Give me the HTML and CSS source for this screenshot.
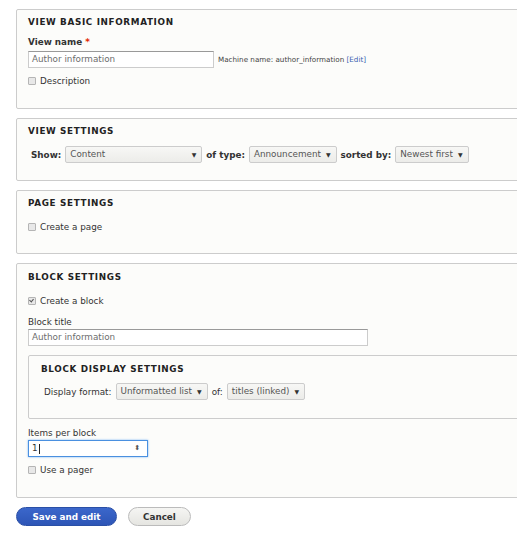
FILE: index.html
```html
<!DOCTYPE html>
<html lang="en">
<head>
    <meta charset="UTF-8">
    <title>Add view</title>
    <link rel="stylesheet" href="styles.css">
</head>
<body>
    <form class="views-form">
        <!-- Basic information -->
        <div class="fieldset basic">
            <div class="legend">View basic information</div>
            <div class="field-label">View name <span class="required">*</span></div>
            <div class="name-row">
                <div class="text-input name-input">Author information</div>
                <span class="machine-name">Machine name: author_information <a href="#">[Edit]</a></span>
            </div>
            <div class="checkbox-row"><span class="checkbox"></span>Description</div>
        </div>

        <!-- Wizard: what to show -->
        <div class="fieldset view-settings">
            <div class="legend">View settings</div>
            <div class="inline-row">
                <span class="inline-label">Show:</span>
                <span class="select select-show">Content</span>
                <span class="inline-label">of type:</span>
                <span class="select">Announcement</span>
                <span class="inline-label">sorted by:</span>
                <span class="select">Newest first</span>
            </div>
        </div>

        <div class="fieldset page-settings">
            <div class="legend">Page settings</div>
            <div class="checkbox-row"><span class="checkbox"></span>Create a page</div>
        </div>

        <div class="fieldset block-settings">
            <div class="legend">Block settings</div>
            <div class="checkbox-row"><span class="checkbox checked"></span>Create a block</div>
            <div class="plain-label">Block title</div>
            <div class="text-input block-title">Author information</div>

            <div class="fieldset inner">
                <div class="legend">Block display settings</div>
                <div class="inline-row plain">
                    <span class="inline-label">Display format:</span>
                    <span class="select">Unformatted list</span>
                    <span class="inline-label">of:</span>
                    <span class="select">titles (linked)</span>
                </div>
            </div>

            <div class="plain-label">Items per block</div>
            <div class="text-input number-input"><span>1</span><span class="caret"></span><span class="spinner">&#11021;</span></div>
            <div class="checkbox-row pager"><span class="checkbox"></span>Use a pager</div>
        </div>

        <div class="actions">
            <button type="button" class="button primary">Save and edit</button>
            <button type="button" class="button">Cancel</button>
        </div>
    </form>
</body>
</html>
```

FILE: styles.css
```css
html {
    overflow: hidden;
}
body {
    margin: 0;
    background: #fff;
    font-family: "DejaVu Sans", Verdana, sans-serif;
    font-size: 8.8px;
    color: #333;
}
.views-form {
    padding: 9px 0 0 16px;
    width: 540px;
}
.fieldset {
    border: 1px solid #ccc;
    border-radius: 2px;
    background: #fcfcfa;
    padding: 5px 11px 20px;
    margin-bottom: 9px;
}
.legend {
    font-weight: bold;
    text-transform: uppercase;
    letter-spacing: 0.65px;
    line-height: 14px;
    color: #222;
}
.field-label {
    font-weight: bold;
    line-height: 14px;
    margin-top: 6px;
}
.required {
    color: #e32700;
}
.name-row {
    display: flex;
    align-items: center;
    gap: 4px;
    margin-top: 2px;
}
.text-input {
    box-sizing: border-box;
    height: 17px;
    border: 1px solid #ccc;
    border-top-color: #999;
    background: #fff;
    color: #6d6d6d;
    padding: 0 3px;
    line-height: 15px;
}
.name-input {
    width: 186px;
}
.machine-name {
    font-size: 7.2px;
    color: #444;
}
.machine-name a {
    color: #3b5fb0;
    text-decoration: none;
}
.checkbox-row {
    display: flex;
    align-items: center;
    line-height: 14px;
    margin-top: 6px;
}
.checkbox {
    box-sizing: border-box;
    width: 8px;
    height: 8px;
    border: 1px solid #b5b5b5;
    border-radius: 1px;
    background: #e8e8e8;
    margin-right: 4px;
    position: relative;
}
.checkbox.checked::after {
    content: "";
    position: absolute;
    left: 1px;
    top: 0;
    width: 2px;
    height: 3px;
    border: solid #555;
    border-width: 0 1.5px 1.5px 0;
    transform: rotate(40deg);
}
.inline-row {
    display: flex;
    align-items: center;
    gap: 4px;
    margin-top: 8px;
    padding-left: 3px;
}
.inline-label {
    font-weight: bold;
}
.inline-row.plain .inline-label {
    font-weight: normal;
}
.select {
    box-sizing: border-box;
    height: 17px;
    line-height: 15px;
    border: 1px solid #ccc;
    border-radius: 2px;
    background: linear-gradient(#f7f7f5, #ecece9);
    padding: 0 5px 0 4px;
    color: #555;
    display: inline-flex;
    justify-content: space-between;
}
.select::after {
    content: "\25BC";
    font-size: 6px;
    padding-left: 5px;
    color: #333;
}
.select-show {
    width: 137px;
}
.view-settings {
    padding-bottom: 17px;
}
.page-settings {
    padding-top: 5px;
    padding-bottom: 19px;
}
.page-settings .checkbox-row {
    margin-top: 10px;
}
.block-settings {
    padding-top: 6px;
    padding-bottom: 20px;
}
.block-settings > .checkbox-row {
    margin-top: 10px;
}
.plain-label {
    line-height: 14px;
    margin-top: 7px;
}
.block-title {
    width: 340px;
    margin-top: 0;
}
.fieldset.inner {
    margin: 9px 0 0;
    padding: 6px 12px 18px;
}
.inner .inline-row {
    margin-top: 7px;
}
.number-input {
    width: 120px;
    margin-top: 0;
    display: flex;
    align-items: center;
    border: 1px solid #4a90e0;
    box-shadow: 0 0 2px #7ab4f5;
    color: #333;
}
.caret {
    width: 1px;
    height: 10px;
    background: #222;
    margin-left: 1px;
}
.spinner {
    margin-left: auto;
    margin-right: 4px;
    font-size: 7px;
    color: #555;
}
.checkbox-row.pager {
    margin-top: 6px;
}
.actions {
    display: flex;
    gap: 11px;
    margin-top: 2px;
}
.button {
    font-family: inherit;
    font-size: 8.8px;
    font-weight: bold;
    height: 19px;
    padding: 0 14px;
    border-radius: 10px;
    border: 1px solid #bbb;
    background: linear-gradient(#f5f5f3, #e5e5e1);
    color: #333;
    cursor: pointer;
}
.button.primary {
    width: 101px;
    border-color: #2a4fa6;
    background: linear-gradient(#3b67cb, #2d55b6);
    color: #fff;
}
```
